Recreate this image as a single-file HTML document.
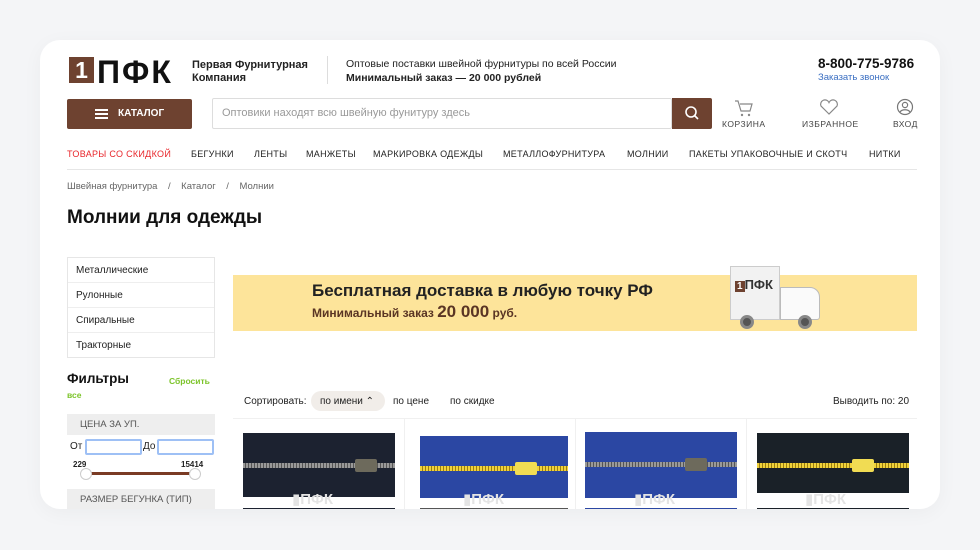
<!DOCTYPE html>
<html><head><meta charset="utf-8"><style>
*{margin:0;padding:0;box-sizing:border-box}
body{width:980px;height:550px;background:#f4f5f7;font-family:"Liberation Sans","DejaVu Sans",sans-serif;color:#222;position:relative;overflow:hidden}
.card{position:absolute;left:40px;top:40px;width:900px;height:469px;background:#fff;border-radius:20px;overflow:hidden;box-shadow:0 4px 20px rgba(0,0,0,.04)}
.a{position:absolute;white-space:nowrap}
.zip{position:absolute;height:64px}
.zip .t{position:absolute;left:0;right:0;top:30px;height:5px;background:repeating-linear-gradient(90deg,#999 0 2px,#555 2px 3px)}
.zip .s{position:absolute;top:26px;width:22px;height:13px;border-radius:2px}
.wm{position:absolute;font-weight:bold;color:#e4e4e4;font-size:15px}
.nav .a{font-size:9px;letter-spacing:.3px}
</style></head><body>
<div class="card">
 <div class="a" style="left:29px;top:17px;width:25px;height:26px;background:#6e4230;color:#fff;font-weight:bold;font-size:23px;line-height:26px;text-align:center">1</div>
 <div class="a" style="left:57px;top:16px;font-size:32px;line-height:32px;font-weight:bold;color:#111;letter-spacing:2px">ПФК</div>
 <div class="a" style="left:152px;top:19px;font-size:11px;font-weight:bold;line-height:13px;color:#222">Первая Фурнитурная<br>Компания</div>
 <div class="a" style="left:287px;top:16px;width:1px;height:28px;background:#ddd"></div>
 <div class="a" style="left:306px;top:17px;font-size:10.5px;line-height:14px;color:#222">Оптовые поставки швейной фурнитуры по всей России<br><b>Минимальный заказ — 20 000 рублей</b></div>
 <div class="a" style="left:778px;top:16px;font-size:13.5px;font-weight:bold;color:#111">8-800-775-9786</div>
 <div class="a" style="left:778px;top:32px;font-size:9.5px;color:#3b6fc2">Заказать звонок</div>
 <div class="a" style="left:27px;top:59px;width:125px;height:30px;background:#6e4230;border-radius:2px;color:#fff;font-size:10px;font-weight:bold;line-height:30px">
  <span style="position:absolute;left:28px;top:10px;width:13px;height:2px;background:#fff;box-shadow:0 4px 0 #fff,0 8px 0 #fff"></span>
  <span style="position:absolute;left:51px">КАТАЛОГ</span></div>
 <div class="a" style="left:172px;top:58px;width:460px;height:31px;border:1px solid #ddd;border-radius:2px;font-size:11px;color:#999;line-height:29px;padding-left:9px">Оптовики находят всю швейную фунитуру здесь</div>
 <div class="a" style="left:632px;top:58px;width:40px;height:31px;background:#6e4230;border-radius:0 2px 2px 0">
  <svg width="40" height="31"><circle cx="19" cy="14" r="5" fill="none" stroke="#fff" stroke-width="1.6"/><line x1="22.5" y1="17.5" x2="26" y2="21" stroke="#fff" stroke-width="1.6"/></svg></div>
 <svg class="a" style="left:693px;top:58px" width="22" height="20"><path d="M2 3h3l3 10h9l2-7H7" fill="none" stroke="#888" stroke-width="1.2"/><circle cx="9" cy="17" r="1.2" fill="#888"/><circle cx="16" cy="17" r="1.2" fill="#888"/></svg>
 <div class="a" style="left:682px;top:79px;font-size:8.5px;letter-spacing:.5px;color:#444">КОРЗИНА</div>
 <svg class="a" style="left:778px;top:58px" width="22" height="18"><path d="M11 16L3 8a4.2 4.2 0 0 1 8-3.5A4.2 4.2 0 0 1 19 8z" fill="none" stroke="#888" stroke-width="1.2"/></svg>
 <div class="a" style="left:762px;top:79px;font-size:8.5px;letter-spacing:.5px;color:#444">ИЗБРАННОЕ</div>
 <svg class="a" style="left:855px;top:57px" width="20" height="20"><circle cx="10" cy="10" r="7.5" fill="none" stroke="#777" stroke-width="1.2"/><circle cx="10" cy="8" r="2.6" fill="none" stroke="#777" stroke-width="1.2"/><path d="M5 15c2-3 8-3 10 0" fill="none" stroke="#777" stroke-width="1.2"/></svg>
 <div class="a" style="left:853px;top:79px;font-size:8.5px;letter-spacing:.5px;color:#444">ВХОД</div>
 <div class="nav a" style="top:109px;left:0;color:#222">
  <span class="a" style="left:27px;color:#e8262b">ТОВАРЫ СО СКИДКОЙ</span>
  <span class="a" style="left:151px">БЕГУНКИ</span>
  <span class="a" style="left:214px">ЛЕНТЫ</span>
  <span class="a" style="left:266px">МАНЖЕТЫ</span>
  <span class="a" style="left:333px">МАРКИРОВКА ОДЕЖДЫ</span>
  <span class="a" style="left:463px">МЕТАЛЛОФУРНИТУРА</span>
  <span class="a" style="left:587px">МОЛНИИ</span>
  <span class="a" style="left:649px">ПАКЕТЫ УПАКОВОЧНЫЕ И СКОТЧ</span>
  <span class="a" style="left:829px">НИТКИ</span>
 </div>
 <div class="a" style="left:27px;top:129px;width:850px;height:1px;background:#e6e6e6"></div>
 <div class="a" style="left:27px;top:141px;font-size:9.5px;color:#666">Швейная фурнитура &nbsp;&nbsp; / &nbsp;&nbsp; Каталог &nbsp;&nbsp; / &nbsp;&nbsp; Молнии</div>
 <div class="a" style="left:27px;top:167px;font-size:19px;font-weight:bold;color:#111">Молнии для одежды</div>
 <div class="a" style="left:27px;top:217px;width:148px;height:101px;border:1px solid #e6e6e6;font-size:10px;color:#222">
  <div style="height:25px;line-height:25px;padding-left:8px;border-bottom:1px solid #eee">Металлические</div>
  <div style="height:25px;line-height:25px;padding-left:8px;border-bottom:1px solid #eee">Рулонные</div>
  <div style="height:25px;line-height:25px;padding-left:8px;border-bottom:1px solid #eee">Спиральные</div>
  <div style="height:25px;line-height:25px;padding-left:8px">Тракторные</div>
 </div>
 <div class="a" style="left:27px;top:331px;font-size:13.5px;font-weight:bold;color:#111">Фильтры</div>
 <div class="a" style="left:129px;top:336px;font-size:8.5px;font-weight:bold;color:#7cc42a">Сбросить</div>
 <div class="a" style="left:27px;top:350px;font-size:8.5px;font-weight:bold;color:#7cc42a">все</div>
 <div class="a" style="left:27px;top:374px;width:148px;height:21px;background:#eee;font-size:9.5px;color:#555;line-height:21px;padding-left:13px">ЦЕНА ЗА УП.</div>
 <div class="a" style="left:30px;top:401px;font-size:10px">От</div>
 <div class="a" style="left:45px;top:399px;width:57px;height:16px;border:2px solid #9ec0f5;border-radius:2px"></div>
 <div class="a" style="left:103px;top:401px;font-size:10px">До</div>
 <div class="a" style="left:117px;top:399px;width:57px;height:16px;border:2px solid #9ec0f5;border-radius:2px"></div>
 <div class="a" style="left:33px;top:420px;font-size:8px;font-weight:bold">229</div>
 <div class="a" style="left:141px;top:420px;font-size:8px;font-weight:bold">15414</div>
 <div class="a" style="left:45px;top:432px;width:112px;height:3px;background:#7a3b24"></div>
 <div class="a" style="left:40px;top:428px;width:12px;height:12px;border-radius:50%;background:#fff;border:1px solid #ccc"></div>
 <div class="a" style="left:149px;top:428px;width:12px;height:12px;border-radius:50%;background:#fff;border:1px solid #ccc"></div>
 <div class="a" style="left:27px;top:449px;width:148px;height:22px;background:#eee;font-size:9.5px;color:#555;line-height:22px;padding-left:13px">РАЗМЕР БЕГУНКА (ТИП)</div>
 <div class="a" style="left:193px;top:235px;width:684px;height:56px;background:#fde49a"></div>
 <div class="a" style="left:272px;top:241px;font-size:17px;font-weight:bold;color:#222">Бесплатная доставка в любую точку РФ</div>
 <div class="a" style="left:272px;top:262px;font-size:12px;font-weight:bold;color:#5a3524">Минимальный заказ <span style="font-size:17px">20 000</span> руб.</div>
 <div class="a" style="left:690px;top:226px;width:50px;height:54px;background:#f2f2f2;border:1px solid #ccc"></div>
 <div class="a" style="left:695px;top:237px;font-size:13px;font-weight:bold;color:#333"><span style="background:#6e4230;color:#fff;padding:0 2px;font-size:10px">1</span>ПФК</div>
 <div class="a" style="left:740px;top:247px;width:40px;height:33px;background:#fafafa;border:1px solid #bbb;border-radius:0 10px 3px 0"></div>
 <div class="a" style="left:700px;top:275px;width:14px;height:14px;border-radius:50%;background:#555;border:3px solid #888"></div>
 <div class="a" style="left:758px;top:275px;width:14px;height:14px;border-radius:50%;background:#555;border:3px solid #888"></div>
 <div class="a" style="left:204px;top:356px;font-size:10px;color:#222">Сортировать:</div>
 <div class="a" style="left:271px;top:351px;width:74px;height:20px;border-radius:10px;background:#f1ede9"></div>
 <div class="a" style="left:280px;top:356px;font-size:10px">по имени ⌃</div>
 <div class="a" style="left:353px;top:356px;font-size:10px">по цене</div>
 <div class="a" style="left:410px;top:356px;font-size:10px">по скидке</div>
 <div class="a" style="left:793px;top:356px;font-size:10px">Выводить по: 20</div>
 <div class="a" style="left:193px;top:378px;width:684px;height:1px;background:#f0f0f0"></div>
 <div class="a" style="left:364px;top:378px;width:1px;height:100px;background:#f0f0f0"></div>
 <div class="a" style="left:535px;top:378px;width:1px;height:100px;background:#f0f0f0"></div>
 <div class="a" style="left:706px;top:378px;width:1px;height:100px;background:#f0f0f0"></div>
 <div class="zip" style="left:203px;top:393px;width:152px;background:#1c2230"><div class="t"></div><div class="s" style="left:112px;background:#6d6a5c"></div></div>
 <div class="zip" style="left:380px;top:396px;width:148px;height:62px;background:#2b47a3"><div class="t" style="background:repeating-linear-gradient(90deg,#f0d23a 0 2px,#9a7c10 2px 3px)"></div><div class="s" style="left:95px;background:#f1dc53"></div></div>
 <div class="zip" style="left:545px;top:392px;width:152px;height:66px;background:#2b47a3"><div class="t"></div><div class="s" style="left:100px;background:#6d6a5c"></div></div>
 <div class="zip" style="left:717px;top:393px;width:152px;height:60px;background:#1a2128"><div class="t" style="background:repeating-linear-gradient(90deg,#f0d23a 0 2px,#9a7c10 2px 3px)"></div><div class="s" style="left:95px;background:#f1dc53"></div></div>
 <div class="wm" style="left:252px;top:450px">▮ПФК</div>
 <div class="wm" style="left:423px;top:450px">▮ПФК</div>
 <div class="wm" style="left:594px;top:450px">▮ПФК</div>
 <div class="wm" style="left:765px;top:450px">▮ПФК</div>
 <div class="a" style="left:203px;top:468px;width:152px;height:3px;background:#1c2230"></div>
 <div class="a" style="left:380px;top:468px;width:148px;height:3px;background:#555"></div>
 <div class="a" style="left:545px;top:468px;width:152px;height:3px;background:#2b47a3"></div>
 <div class="a" style="left:717px;top:468px;width:152px;height:3px;background:#1a2128"></div>
</div>
</body></html>
